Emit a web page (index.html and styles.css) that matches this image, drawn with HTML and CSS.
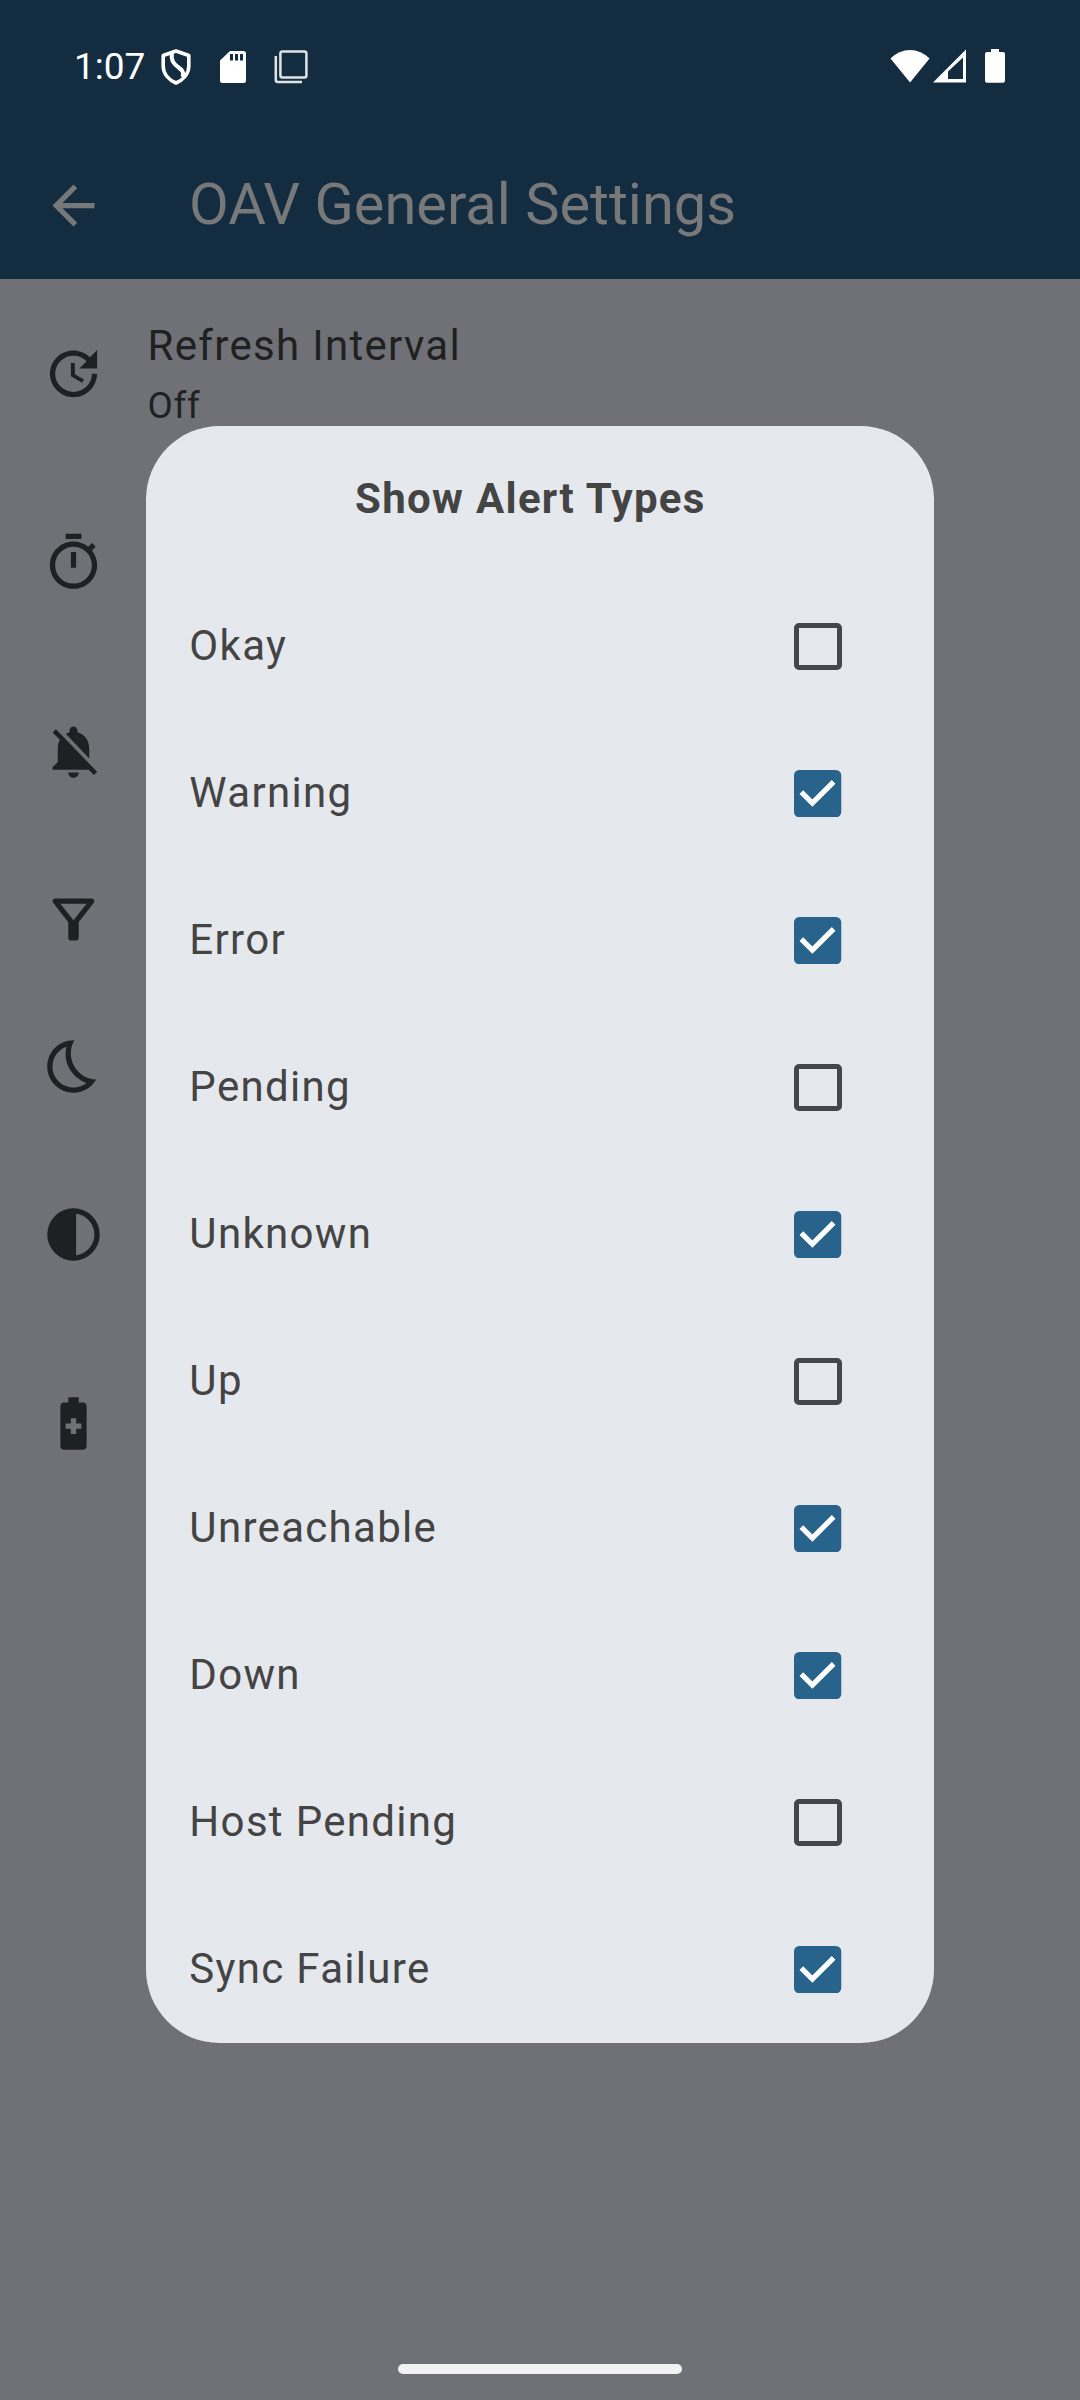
FILE: index.html
```html
<!DOCTYPE html>
<html lang="en">
<head>
<meta charset="utf-8">
<title>OAV General Settings</title>
<link rel="stylesheet" href="styles.css">
</head>
<body>
<div class="screen">
  <header class="top">
    <div class="status">
      <span class="clock">1:07</span>
      <svg class="shield" width="30" height="36" viewBox="0 0 30 36" fill="none" stroke="#fff"><path stroke-width="3.6" stroke-linejoin="round" d="M15 2 27.8 6.5V17C27.8 25 22 31 15 34 8 31 2.200 25 2.200 17V6.500Z"/><path stroke-width="4" d="M10.800 4C10 12 13 15 17 18 20.500 20.500 23.500 23 21.500 28"/></svg>
      <svg class="sd" width="26" height="32" viewBox="0 0 26 32"><path fill="#fff" fill-rule="evenodd" d="M10 0H23.500Q26 0 26 2.500V29.500Q26 32 23.500 32H2.500Q0 32 0 29.500V9.500ZM10 3V9.500H13V3ZM15 3V9.500H18V3ZM20 3V9.500H23V3Z"/></svg>
      <svg class="copy" width="34" height="34" viewBox="0 0 34 34" fill="none" stroke="#dfe3e6" stroke-width="2.500"><rect x="6.400" y="1.400" width="26" height="26" rx="2"/><path d="M1.800 6V30Q1.800 32 3.800 32H28"/></svg>
      <span class="spacer"></span>
      <svg width="40" height="34" viewBox="0 0 40 34"><path fill="#fff" d="M20 33.500 .500 9.500Q9 1 20 1T39.500 9.500Z"/></svg>
      <svg class="signal" width="33" height="34" viewBox="0 0 33 34"><path fill="#fff" fill-rule="evenodd" d="M33 .500V33.500H0ZM30 8.500 15 22.500V30H30Z"/></svg>
      <svg class="batt" width="20" height="34" viewBox="0 0 20 34"><path fill="#fff" d="M6 0H14V3H18Q20 3 20 5V31.500Q20 33.800 18 33.800H2Q0 33.800 0 31.500V5Q0 3 2 3H6Z"/></svg>
    </div>
    <div class="appbar">
      <svg class="icon" viewBox="0 0 24 24"><path d="M20 11H7.830l5.590-5.590L12 4l-8 8 8 8 1.410-1.410L7.830 13H20z"/></svg>
      <h1>OAV General Settings</h1>
    </div>
  </header>

  <main class="settings">
    <div class="pref">
      <svg class="icon" viewBox="0 0 24 24"><path d="M21 10.120h-6.780l2.740-2.820c-2.730-2.700-7.150-2.800-9.880-.100-2.730 2.710-2.730 7.080 0 9.790s7.150 2.710 9.880 0C18.320 15.650 19 14.080 19 12.100h2c0 1.980-.880 4.550-2.640 6.290-3.510 3.480-9.210 3.480-12.720 0-3.500-3.470-3.530-9.110-.020-12.580s9.140-3.470 12.650 0L21 3v7.120zM12.500 8v4.250l3.500 2.080-.720 1.210L11 13V8h1.500z"/></svg>
      <div class="pref-text"><div class="pref-title">Refresh Interval</div><div class="pref-sum">Off</div></div>
    </div>
    <div class="pref"><svg class="icon" viewBox="0 0 24 24"><path d="M15 1H9v2h6V1zm-4 13h2V8h-2v6zm8.030-6.610 1.420-1.420c-.430-.510-.900-.990-1.410-1.410l-1.420 1.420C16.070 4.740 14.120 4 12 4c-4.970 0-9 4.030-9 9s4.020 9 9 9 9-4.030 9-9c0-2.120-.740-4.070-1.970-5.610zM12 20c-3.870 0-7-3.130-7-7s3.130-7 7-7 7 3.130 7 7-3.130 7-7 7z"/></svg></div>
    <div class="pref"><svg class="icon" viewBox="0 0 24 24"><path d="M20 18.690 7.840 6.140 5.270 3.490 4 4.760l2.800 2.800v.010c-.520.990-.800 2.160-.800 3.420v5l-2 2v1h13.730l2 2L21 19.720l-1-1.030zM12 22c1.110 0 2-.890 2-2h-4c0 1.110.890 2 2 2zm6-7.320V11c0-3.080-1.640-5.640-4.500-6.320V4c0-.830-.670-1.500-1.500-1.500s-1.500.670-1.500 1.500v.680c-.150.030-.290.080-.420.120-.100.030-.200.070-.300.110h-.010c-.010 0-.010 0-.020.010-.230.090-.460.200-.680.310 0 0-.010 0-.010.010L18 14.680z"/></svg></div>
    <div class="pref short"><svg class="icon" viewBox="0 0 24 24"><path d="M7 6h10l-5.010 6.300L7 6zm-2.750-.390C6.270 8.200 10 13 10 13v6c0 .550.450 1 1 1h2c.550 0 1-.450 1-1v-6s3.720-4.800 5.740-7.390c.510-.660.040-1.610-.790-1.610H5.040c-.830 0-1.300.950-.790 1.610z"/></svg></div>
    <div class="pref short"><svg class="icon" viewBox="0 0 24 24"><path d="M9.270 4.490c-1.630 7.540 3.750 12.410 7.660 13.800C15.540 19.380 13.810 20 12 20c-4.410 0-8-3.590-8-8 0-3.450 2.200-6.400 5.270-7.510M11.990 2.010C6.400 2.010 2 6.540 2 12c0 5.520 4.480 10 10 10 3.710 0 6.930-2.020 8.660-5.020C13.150 16.730 8.570 8.550 12.330 2.010h-.340z"/></svg></div>
    <div class="pref"><svg class="icon" viewBox="0 0 24 24"><path fill-rule="evenodd" d="M12 2a10 10 0 1 0 0 20 10 10 0 0 0 0-20zm1 2.070a8 8 0 0 1 0 15.860z"/></svg></div>
    <div class="pref"><svg class="icon" viewBox="0 0 24 24"><path d="M15.670 4H14V2h-4v2H8.330C7.600 4 7 4.600 7 5.330v15.330C7 21.400 7.600 22 8.330 22h7.330c.740 0 1.340-.600 1.340-1.330V5.330C17 4.600 16.400 4 15.670 4zM15 14h-2v2h-2v-2H9v-2h2v-2h2v2h2v2z"/></svg></div>
  </main>

  <section class="dialog">
    <h2>Show Alert Types</h2>
    <div class="row"><span>Okay</span><i class="box"></i></div>
    <div class="row"><span>Warning</span><svg class="check" viewBox="3 3 18 18"><rect x="3" y="3" width="18" height="18" rx="2"/><path d="M5.800 11.400 10 15.600 18.100 7.500"/></svg></div>
    <div class="row"><span>Error</span><svg class="check" viewBox="3 3 18 18"><rect x="3" y="3" width="18" height="18" rx="2"/><path d="M5.800 11.400 10 15.600 18.100 7.500"/></svg></div>
    <div class="row"><span>Pending</span><i class="box"></i></div>
    <div class="row"><span>Unknown</span><svg class="check" viewBox="3 3 18 18"><rect x="3" y="3" width="18" height="18" rx="2"/><path d="M5.800 11.400 10 15.600 18.100 7.500"/></svg></div>
    <div class="row"><span>Up</span><i class="box"></i></div>
    <div class="row"><span>Unreachable</span><svg class="check" viewBox="3 3 18 18"><rect x="3" y="3" width="18" height="18" rx="2"/><path d="M5.800 11.400 10 15.600 18.100 7.500"/></svg></div>
    <div class="row"><span>Down</span><svg class="check" viewBox="3 3 18 18"><rect x="3" y="3" width="18" height="18" rx="2"/><path d="M5.800 11.400 10 15.600 18.100 7.500"/></svg></div>
    <div class="row"><span>Host Pending</span><i class="box"></i></div>
    <div class="row"><span>Sync Failure</span><svg class="check" viewBox="3 3 18 18"><rect x="3" y="3" width="18" height="18" rx="2"/><path d="M5.800 11.400 10 15.600 18.100 7.500"/></svg></div>
  </section>

  <div class="handle"></div>
</div>
</body>
</html>
```
FILE: styles.css
```css
* { box-sizing: border-box; }
body { margin: 0; font-family: Roboto, "Liberation Sans", sans-serif; }
h1, h2 { margin: 0; font-weight: 400; }
svg { display: block; flex: none; }

.screen {
  position: relative;
  display: flex;
  flex-direction: column;
  width: 1080px;
  height: 2400px;
  overflow: hidden;
  background: #707176;
}

.top { height: 279px; background: #132c3f; }
.status {
  display: flex;
  align-items: center;
  height: 132px;
  padding: 0 75px 0 74px;
  color: #fff;
}
.clock { width: 86.500px; margin-top: 1px; font-size: 37px; line-height: 44px; }
.shield { margin-top: 2px; }
.sd { margin-left: 29px; margin-top: 2px; }
.copy { margin-left: 28px; margin-top: 1px; }
.spacer { flex: 1; }
.signal { margin-left: 3px; }
.batt { margin-left: 19px; }
.appbar {
  display: flex;
  align-items: center;
  height: 147px;
  padding-left: 42px;
  color: #767879;
}
.appbar h1 {
  margin-left: 84px;
  padding-bottom: 4px;
  font-size: 57.750px;
  line-height: 68px;
}

.icon { width: 63px; height: 63px; fill: currentColor; }

.settings { flex: 1; color: #1d2124; }
.pref {
  display: flex;
  align-items: center;
  height: 189px;
  padding-left: 42px;
}
.pref.short { height: 147px; }
.pref-text { margin-left: 42.600px; padding-top: 1px; }
.pref-title {
  color: #1f2020;
  font-size: 42px;
  line-height: 60px;
  letter-spacing: 1.310px;
}
.pref-sum {
  padding-top: 3px;
  font-size: 36.750px;
  line-height: 54px;
  letter-spacing: 0.660px;
}

.dialog {
  position: absolute;
  left: 146.250px;
  top: 426px;
  width: 787.500px;
  height: 1617px;
  border-radius: 73.500px;
  background: #e5e8ed;
  color: #444;
}
.dialog h2 {
  height: 147px;
  padding: 48px 0 0 208.750px;
  font-size: 42px;
  line-height: 50px;
  font-weight: 700;
  letter-spacing: 1.310px;
}
.row {
  display: flex;
  align-items: center;
  justify-content: space-between;
  height: 147px;
  padding: 0 92.200px 0 43.100px;
  font-size: 42px;
  line-height: 50px;
  letter-spacing: 1.310px;
}
.row span { padding-bottom: 2px; }
.box {
  width: 47.250px;
  height: 47.250px;
  border: 5px solid #43474b;
  border-radius: 5px;
}
.check { width: 47.250px; height: 47.250px; }
.check rect { fill: #28638b; }
.check path { fill: none; stroke: #fff; stroke-width: 2; }

.handle {
  align-self: center;
  width: 284px;
  height: 10px;
  margin-bottom: 26px;
  border-radius: 5px;
  background: #f2f2f2;
}
```
